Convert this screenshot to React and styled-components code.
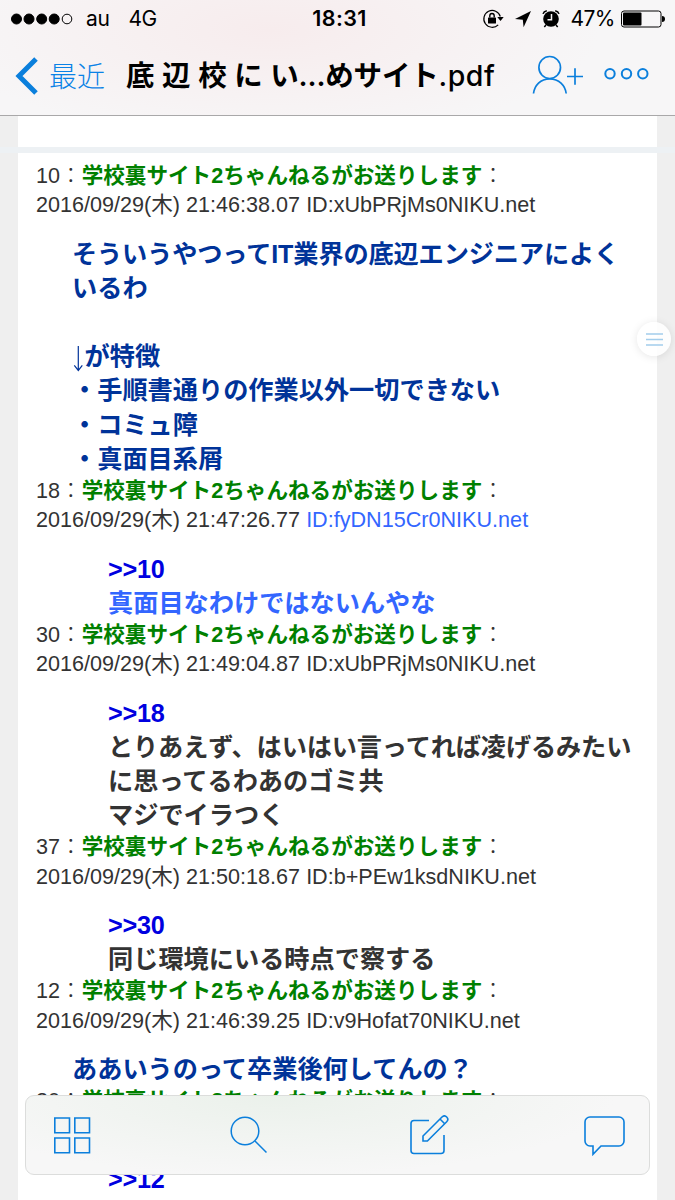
import React from 'react';
import styled, { createGlobalStyle } from 'styled-components';

const GlobalStyle = createGlobalStyle`
  * {
    box-sizing: border-box;
  }

  body {
    margin: 0;
    background-color: #efefef;
    text-spacing-trim: space-all;
  }
`;

const Screen = styled.div`
  position: relative;
  display: flex;
  flex-direction: column;
  width: 675px;
  height: 1200px;
  overflow: hidden;
  background-color: #efefef;
`;

const TopBar = styled.header`
  flex: none;
  height: 116px;
  border-bottom: 1px solid #a9a8a9;
  background: radial-gradient(
      ellipse 330px 110px at 270px 30px,
      #f7eced,
      rgba(247, 244, 245, 0)
    )
    #f7f6f7;
  color: black;
  font-family: Inter, 'Noto Sans CJK JP', sans-serif;
`;

const StatusBar = styled.div`
  display: grid;
  grid-template-columns: 1fr auto 1fr;
  align-items: center;
  height: 37px;
  padding: 0 10px 0 11px;
  font-size: 21.5px;
  line-height: 37px;
  white-space: nowrap;
`;

const Carrier = styled.div`
  display: flex;
  align-items: center;
`;

const CarrierText = styled.span`
  margin-left: ${props => props.$gap}px;
  font-size: 21px;
  letter-spacing: -0.4px;
`;

const Clock = styled.span`
  padding-left: 3px;
  font-weight: 600;
  font-size: 21.5px;
  letter-spacing: 0.4px;
`;

const StatusIcons = styled.div`
  display: flex;
  align-items: center;
  justify-content: flex-end;
`;

const Battery = styled.span`
  margin: 0 5px 0 10px;
  font-size: 21px;
  letter-spacing: -0.5px;
`;

const NavBar = styled.nav`
  display: flex;
  align-items: center;
  height: 78px;
  padding-left: 15px;
`;

const BackLabel = styled.span`
  width: 56px;
  margin: 0 21px 2px 11px;
  color: #0a82e6;
  font-family: 'Noto Sans CJK JP', sans-serif;
  font-weight: 300;
  font-size: 28px;
  line-height: 40px;
  white-space: nowrap;
`;

const Title = styled.h1`
  width: 370px;
  margin: 0 35px 0 0;
  font-weight: 600;
  font-size: 28.5px;
  line-height: 40px;
  letter-spacing: -0.2px;
  word-spacing: 0.8px;
  white-space: nowrap;
`;

const Extension = styled.span`
  font-weight: 500;
  letter-spacing: 0.5px;
`;

const Icon = styled.svg`
  display: block;
  flex: none;
  fill: none;
  stroke: ${props => props.$color || '#0b7fdc'};
  stroke-width: ${props => props.$weight || 1.7};
`;

const PreviousPage = styled.div`
  flex: none;
  height: 31px;
  margin: 0 18px;
  background-color: white;
`;

const PageGap = styled.div`
  flex: none;
  height: 6px;
  background-color: #edf1f4;
`;

const Page = styled.main`
  flex: 1;
  min-height: 0;
  overflow: hidden;
  margin: 0 18px;
  padding: 8.1px 0 0 18px;
  background-color: white;
  color: #333;
  font-family: 'Liberation Sans', 'Noto Sans CJK JP', sans-serif;
  white-space: nowrap;
`;

const PostHead = styled.div`
  height: 58.6px;
  margin-bottom: 17px;
  font-size: 21.6px;
  line-height: 29.3px;
`;

const HeadLine = styled.div`
  height: 29.3px;
`;

const PosterName = styled.b`
  color: #008000;
`;

const Colon = styled.span`
  font-family: 'Noto Sans CJK JP', sans-serif;
  font-weight: 300;
  line-height: 0;
`;

const PosterId = styled.span`
  color: ${props => props.$color || 'inherit'};
`;

const PostBody = styled.div`
  padding-left: ${props => (props.$reply ? 72 : 36)}px;
  color: ${props => props.$color || '#333'};
  font-weight: bold;
  font-size: 25.2px;
`;

const BodyLine = styled.div`
  height: 34.2px;
  line-height: 34.2px;
  letter-spacing: ${props => (props.$tight ? -0.13 : 0)}px;
`;

const Anchor = styled(BodyLine)`
  color: #0000e0;
  letter-spacing: -0.2px;
`;

const ArrowIcon = styled.svg`
  width: 12.6px;
  height: 28px;
  vertical-align: -7px;
  fill: none;
  stroke: currentColor;
  stroke-width: 1.2;
`;

const SideButton = styled.button`
  position: absolute;
  top: 322px;
  left: 637px;
  display: flex;
  align-items: center;
  justify-content: center;
  width: 34px;
  height: 34px;
  padding: 0;
  border: 0;
  border-radius: 50%;
  background-color: rgba(255, 255, 255, 0.85);
  box-shadow: 0 1px 8px rgba(0, 0, 0, 0.1);
`;

const Toolbar = styled.footer`
  position: absolute;
  top: 1095px;
  left: 25px;
  display: grid;
  grid-template-columns: 176px 179px 175px auto;
  align-items: center;
  width: 625px;
  height: 80px;
  padding: 0 0 0 28px;
  border: 1px solid #dcdddc;
  border-radius: 9px;
  background: radial-gradient(
      ellipse 340px 80px at 250px 0,
      #ebf1eb,
      rgba(247, 247, 247, 0)
    )
    #f7f7f7;
`;

const NAME = '学校裏サイト2ちゃんねるがお送りします';

const posts = [
  {
    no: 10,
    date: '2016/09/29(木) 21:46:38.07',
    id: 'ID:xUbPRjMs0NIKU.net',
    color: '#003399',
    lines: [
      'そういうやつってIT業界の底辺エンジニアによく',
      'いるわ',
      '',
      '↓が特徴',
      '・手順書通りの作業以外一切できない',
      '・コミュ障',
      '・真面目系屑'
    ]
  },
  {
    no: 18,
    date: '2016/09/29(木) 21:47:26.77',
    id: 'ID:fyDN15Cr0NIKU.net',
    idColor: '#3366ff',
    color: '#3366ff',
    anchor: '>>10',
    lines: ['真面目なわけではないんやな']
  },
  {
    no: 30,
    date: '2016/09/29(木) 21:49:04.87',
    id: 'ID:xUbPRjMs0NIKU.net',
    anchor: '>>18',
    lines: [
      'とりあえず、はいはい言ってれば凌げるみたい',
      'に思ってるわあのゴミ共',
      'マジでイラつく'
    ]
  },
  {
    no: 37,
    date: '2016/09/29(木) 21:50:18.67',
    id: 'ID:b+PEw1ksdNIKU.net',
    anchor: '>>30',
    lines: ['同じ環境にいる時点で察する']
  },
  {
    no: 12,
    date: '2016/09/29(木) 21:46:39.25',
    id: 'ID:v9Hofat70NIKU.net',
    color: '#003399',
    lines: ['ああいうのって卒業後何してんの？']
  },
  {
    no: 20,
    date: '',
    id: '',
    anchor: '>>12',
    lines: []
  }
];

const DownArrow = () => (
  <ArrowIcon viewBox="0 0 12.6 28">
    <path d="M6.3 2v24.500M2.300 21.500l4 5 4-5" />
  </ArrowIcon>
);

const Line = ({ text }) => (
  <BodyLine $tight={text.length > 20}>
    {text.startsWith('↓') ? (
      <>
        <DownArrow />
        {text.slice(1)}
      </>
    ) : (
      text
    )}
  </BodyLine>
);

const Post = ({ post }) => (
  <article>
    <PostHead>
      <HeadLine>
        {post.no}
        <Colon>：</Colon>
        <PosterName>{NAME}</PosterName>
        <Colon>：</Colon>
      </HeadLine>
      <HeadLine>
        {post.date} <PosterId $color={post.idColor}>{post.id}</PosterId>
      </HeadLine>
    </PostHead>
    <PostBody $reply={Boolean(post.anchor)} $color={post.color}>
      {post.anchor && <Anchor>{post.anchor}</Anchor>}
      {post.lines.map((line, i) => (
        <Line key={i} text={line} />
      ))}
    </PostBody>
  </article>
);

const SignalDots = () => (
  <Icon width="62" height="12" viewBox="0 0 62 12" $color="black" $weight="1">
    {[5.5, 18, 30.7, 43.2].map(cx => (
      <circle key={cx} cx={cx} cy="6" r="5" fill="black" />
    ))}
    <circle cx="56" cy="6" r="4.8" />
  </Icon>
);

const StatusGlyphs = () => (
  <Icon width="78" height="22" viewBox="484 7.500 78 22" $color="black" $weight="1.2">
    <path d="M500.2 24.300A8.400 8.400 0 1 1 502.300 16" />
    <path d="M499.3 16.500h6.400l-3.200 4z" fill="black" stroke="none" />
    <rect x="490" y="17" width="8" height="6" rx=".5" fill="black" stroke="none" />
    <path d="M491.8 17v-1.800a2.200 2.200 0 0 1 4.400 0V17" strokeWidth="1.4" />
    <path d="M533 10.500l-16 8 7.800.7.8 7.600z" fill="black" stroke="none" />
    <circle cx="553" cy="18.500" r="7.800" fill="black" stroke="none" />
    <path d="M553.5 13.500v5.700h-4" stroke="#f7f4f5" strokeWidth="1.5" />
    <path d="M545 13.400q.7-2.400 3.800-3.100M561 13.400q-.7-2.400-3.800-3.100M548 24.500l-1.700 2M558 24.500l1.700 2" strokeWidth="1.5" />
  </Icon>
);

const BatteryIcon = () => (
  <Icon width="45" height="18" viewBox="0 0 45 18" $color="black" $weight="1">
    <rect x="1.5" y="1" width="39.5" height="16" rx="2.5" />
    <rect x="3" y="2.5" width="18.5" height="13" rx="1" fill="black" stroke="none" />
    <path d="M42 6q3 0 3 3t-3 3z" fill="black" stroke="none" />
  </Icon>
);

const App = () => (
  <>
    <GlobalStyle />
    <Screen>
      <TopBar>
        <StatusBar>
          <Carrier>
            <SignalDots />
            <CarrierText $gap={13}>au</CarrierText>
            <CarrierText $gap={19}>4G</CarrierText>
          </Carrier>
          <Clock>18:31</Clock>
          <StatusIcons>
            <StatusGlyphs />
            <Battery>47%</Battery>
            <BatteryIcon />
          </StatusIcons>
        </StatusBar>
        <NavBar>
          <Icon width="23" height="38" viewBox="0 0 23 38" $weight="5">
            <path d="M21 2L4 19l17 17" />
          </Icon>
          <BackLabel>最近</BackLabel>
          <Title>
            底 辺 校 に い...めサイト<Extension>.pdf</Extension>
          </Title>
          <Icon width="120" height="42" viewBox="531 55 120 42">
            <ellipse cx="549.7" cy="67.500" rx="10.800" ry="11" />
            <path d="M533.5 93.500c1-8 7-14.700 16.200-14.700s15.500 6.700 16.500 14.700M567 76.500h16M575 68.300v16.400" />
            <circle cx="610" cy="73.800" r="4.700" strokeWidth="2" />
            <circle cx="626.500" cy="73.800" r="4.700" strokeWidth="2" />
            <circle cx="642.800" cy="73.800" r="4.700" strokeWidth="2" />
          </Icon>
        </NavBar>
      </TopBar>
      <PreviousPage />
      <PageGap />
      <Page>
        {posts.map(post => (
          <Post key={post.no} post={post} />
        ))}
      </Page>
      <SideButton aria-label="menu">
        <Icon width="17" height="13" viewBox="0 0 17 13" $color="#a3cdec" $weight="1.5">
          <path d="M0 1h17M0 6.500h17M0 12h17" />
        </Icon>
      </SideButton>
      <Toolbar>
        <Icon width="37" height="37" viewBox="0 0 37 37" $weight="1.6">
          <path d="M.8 1h14.700v14.700H.8zM20.800 1h14.700v14.700H20.800zM.8 21h14.700v14.700H.8zM20.800 21h14.700v14.700H20.800z" />
        </Icon>
        <Icon width="38" height="38" viewBox="0 0 38 38" $weight="1.5">
          <circle cx="15" cy="15" r="13.800" />
          <path d="M25 25l11.500 11.500" />
        </Icon>
        <Icon width="40" height="40" viewBox="0 0 40 40" $weight="1.6">
          <path d="M20 5.500H5a3 3 0 0 0-3 3v27a3 3 0 0 0 3 3h27a3 3 0 0 0 3-3V20" />
          <path d="M14 26v-5L33 2a3.300 3.300 0 0 1 4.700 4.700L18.400 26zM31 4l4.700 4.700" />
        </Icon>
        <Icon width="41" height="41" viewBox="0 0 41 41" $weight="1.6">
          <path d="M6 2h29a5 5 0 0 1 5 5v19a5 5 0 0 1-5 5H17l-8 8.300V31H6a5 5 0 0 1-5-5V7a5 5 0 0 1 5-5z" />
        </Icon>
      </Toolbar>
    </Screen>
  </>
);

export default App;
